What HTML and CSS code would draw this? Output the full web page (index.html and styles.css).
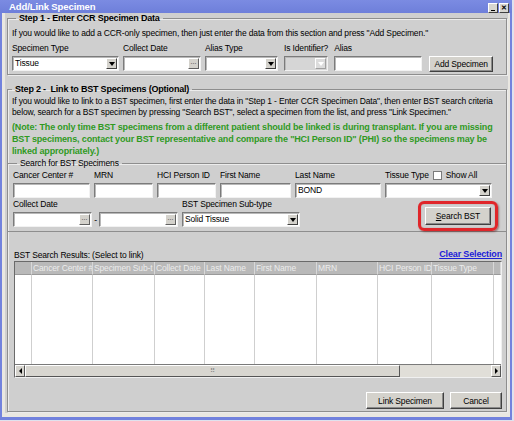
FILE: index.html
```html
<!DOCTYPE html>
<html>
<head>
<meta charset="utf-8">
<link rel="stylesheet" href="styles.css">
</head>
<body>
<div class="window">
  <div class="titlebar">
    <span class="title">Add/Link Specimen</span>
    <div class="tb-btns">
      <span class="tb-btn"><span class="tb-min"></span></span>
      <span class="tb-btn tb-x">&#x2715;</span>
    </div>
  </div>
  <div class="frame">
    <div class="panel">
      <fieldset class="group step1">
        <legend class="legend">Step 1 - Enter CCR Specimen Data</legend>
        <p class="intro">If you would like to add a CCR-only specimen, then just enter the data from this section and press "Add Specimen."</p>
        <div class="row">
          <div class="field">
            <label class="lbl">Specimen Type</label>
            <div class="select w-spec"><span class="sel-text">Tissue</span><span class="dd"><span class="tri"></span></span></div>
          </div>
          <div class="field">
            <label class="lbl">Collect Date</label>
            <div class="input w-cdate"><span class="ell">...</span></div>
          </div>
          <div class="field">
            <label class="lbl">Alias Type</label>
            <div class="select w-atype"><span class="sel-text"></span><span class="dd"><span class="tri"></span></span></div>
          </div>
          <div class="field f-ident">
            <label class="lbl">Is Identifier?</label>
            <div class="select disabled w-ident"><span class="sel-text"></span><span class="dd"><span class="tri"></span></span></div>
          </div>
          <div class="field f-alias">
            <label class="lbl">Alias</label>
            <div class="input w-alias"></div>
          </div>
          <button class="btn btn-add">Add Specimen</button>
        </div>
      </fieldset>

      <fieldset class="group step2">
        <legend class="legend">Step 2 - &nbsp;Link to BST Specimens (Optional)</legend>
        <p class="intro2">If you would like to link to a BST specimen, first enter the data in "Step 1 - Enter CCR Specimen Data", then enter BST search criteria below, search for a BST specimen by pressing "Search BST", select a specimen from the list, and press "Link Specimen."</p>
        <p class="note">(Note: The only time BST specimens from a different patient should be linked is during transplant. If you are missing BST specimens, contact your BST representative and compare the "HCI Person ID" (PHI) so the specimens may be linked appropriately.)</p>

        <fieldset class="group search">
          <legend class="legend-plain">Search for BST Specimens</legend>
          <div class="row r1">
            <div class="field"><label class="lbl">Cancer Center #</label><div class="input w-cc"></div></div>
            <div class="field"><label class="lbl">MRN</label><div class="input w-mrn"></div></div>
            <div class="field"><label class="lbl">HCI Person ID</label><div class="input w-hci"></div></div>
            <div class="field"><label class="lbl">First Name</label><div class="input w-fn"></div></div>
            <div class="field"><label class="lbl">Last Name</label><div class="input w-ln"><span class="val">BOND</span></div></div>
            <div class="field">
              <div class="lbl lbl-tt">Tissue Type <span class="chk"></span> Show All</div>
              <div class="select w-tt"><span class="sel-text"></span><span class="dd"><span class="tri"></span></span></div>
            </div>
          </div>
          <div class="row r2">
            <div class="field">
              <label class="lbl">Collect Date</label>
              <div class="daterange">
                <div class="input w-date"><span class="ell">...</span></div>
                <span class="dash">-</span>
                <div class="input w-date"><span class="ell">...</span></div>
              </div>
            </div>
            <div class="field">
              <label class="lbl">BST Specimen Sub-type</label>
              <div class="select w-sub"><span class="sel-text">Solid Tissue</span><span class="dd"><span class="tri"></span></span></div>
            </div>
            <div class="highlight"><button class="btn btn-search"><u>S</u>earch BST</button></div>
          </div>
        </fieldset>

        <div class="results-head">
          <span class="lbl">BST Search Results: (Select to link)</span>
          <a class="clear">Clear Selection</a>
        </div>
        <div class="table">
          <div class="thead">
            <span class="th"></span>
            <span class="th">Cancer Center #</span>
            <span class="th">Specimen Sub-t</span>
            <span class="th">Collect Date</span>
            <span class="th">Last Name</span>
            <span class="th">First Name</span>
            <span class="th">MRN</span>
            <span class="th">HCI Person ID</span>
            <span class="th">Tissue Type</span>
            <span class="th"></span>
          </div>
          <div class="tbody">
            <span class="td"></span><span class="td"></span><span class="td"></span><span class="td"></span><span class="td"></span><span class="td"></span><span class="td"></span><span class="td"></span><span class="td"></span><span class="td last"></span>
          </div>
          <div class="hscroll">
            <span class="sb-btn"><span class="tri-l"></span></span>
            <span class="thumb"><span class="grip">⠿</span></span>
            <span class="track"></span>
            <span class="sb-btn"><span class="tri-r"></span></span>
          </div>
        </div>
        <div class="footer">
          <button class="btn btn-link">Link Specimen</button>
          <button class="btn btn-cancel">Cancel</button>
        </div>
      </fieldset>
    </div>
  </div>
</div>
</body>
</html>
```

FILE: styles.css
```css
html, body {
  margin: 0;
  padding: 0;
  background: #dfe2ee;
}
body {
  font-family: "Liberation Sans", Arial, sans-serif;
  font-size: 8.5px;
  letter-spacing: -0.15px;
  color: #000;
}
.window {
  width: 512px;
  height: 420px;
  display: flex;
  flex-direction: column;
  background: #7282dd;
}
.titlebar {
  height: 13px;
  display: flex;
  align-items: center;
  justify-content: space-between;
  background: linear-gradient(#7b8be2, #6e7fda);
  padding: 0 3px 0 9px;
}
.title {
  color: #fff;
  font-weight: bold;
  font-size: 9.5px;
  letter-spacing: -0.1px;
}
.tb-btns {
  display: flex;
  gap: 1px;
  margin-top: 2px;
}
.tb-btn {
  width: 8px;
  height: 8px;
  background: #d8d6d0;
  border: 1px solid;
  border-color: #fff #404040 #404040 #fff;
  position: relative;
  font-size: 7px;
  line-height: 8px;
  text-align: center;
  color: #000;
  font-weight: bold;
  letter-spacing: 0;
}
.tb-min {
  position: absolute;
  left: 2px;
  bottom: 1px;
  width: 4px;
  height: 1px;
  background: #000;
}
.frame {
  flex: 1;
  margin: 0 2px 3px 2px;
  background: #e9e7e1;
  padding: 0 2px 4px 3px;
  display: flex;
}
.panel {
  flex: 1;
  background: #cfcfcf;
  padding: 0 1px 0 2px;
  display: flex;
  flex-direction: column;
}
.group {
  margin: 0;
  border: 1px solid #8e8e8e;
  box-shadow: inset 1px 1px 0 #ececec, 1px 1px 0 #ececec;
  min-width: 0;
}
.legend {
  font-weight: bold;
  font-size: 9px;
  letter-spacing: -0.2px;
  padding: 0 3px;
  margin-left: 4px;
}
.legend-plain {
  padding: 0 3px;
  margin-left: 4px;
}
.step1 {
  padding: 2px 9px 5px 4px;
  height: 62px;
  box-sizing: border-box;
  margin-top: 0;
}
.intro {
  margin: 3px 0 6px 0;
  white-space: nowrap;
}
.row {
  display: flex;
  align-items: flex-end;
  gap: 4px;
}
.field {
  display: flex;
  flex-direction: column;
}
.f-ident {
  margin-left: 2px;
}
.f-alias {
  margin-left: 2px;
}
.lbl {
  display: block;
  height: 9px;
  line-height: 9px;
  margin-bottom: 3px;
  white-space: nowrap;
}
.input, .select {
  height: 15px;
  box-sizing: border-box;
  background: #fff;
  border: 1px solid;
  border-color: #7b7b7b #f2f2f2 #f2f2f2 #7b7b7b;
  box-shadow: inset 1px 1px 0 #b8b8b8;
  display: flex;
  align-items: center;
  position: relative;
}
.select {
  justify-content: space-between;
}
.sel-text, .val {
  padding-left: 2px;
  line-height: 13px;
}
.dd {
  width: 11px;
  height: 11px;
  margin-right: 1px;
  background: #d4d2cc;
  border: 1px solid;
  border-color: #fff #404040 #404040 #fff;
  box-sizing: border-box;
  display: flex;
  align-items: center;
  justify-content: center;
}
.tri {
  width: 0;
  height: 0;
  border-left: 3.5px solid transparent;
  border-right: 3.5px solid transparent;
  border-top: 4px solid #000;
}
.disabled {
  background: #d6d6d6;
}
.disabled .dd {
  background: #dcdcdc;
  border-color: #fff #a0a0a0 #a0a0a0 #fff;
}
.disabled .tri {
  border-top-color: #fff;
}
.ell {
  position: absolute;
  right: 1px;
  top: 1px;
  width: 11px;
  height: 11px;
  box-sizing: border-box;
  background: #d4d2cc;
  border: 1px solid;
  border-color: #fff #606060 #606060 #fff;
  font-size: 7px;
  line-height: 6px;
  text-align: center;
  color: #333;
  letter-spacing: 0;
}
.w-spec { width: 107px; }
.w-cdate { width: 78px; }
.w-atype { width: 73px; }
.w-ident { width: 44px; }
.w-alias { width: 88px; }
.btn {
  font-family: "Liberation Sans", Arial, sans-serif;
  font-size: 8.5px;
  letter-spacing: -0.15px;
  background: #d4d2cc;
  border: 1px solid;
  border-color: #fff #404040 #404040 #fff;
  box-shadow: inset -1px -1px 0 #8a8a8a;
  padding: 0;
  height: 16px;
  color: #000;
}
.btn-add {
  width: 64px;
  margin-left: 3px;
  margin-bottom: -1px;
}
.step2 {
  flex: 1;
  margin-top: 9px;
  padding: 0 0 2px 0;
  display: flex;
  flex-direction: column;
  margin-bottom: 1px;
}
.intro2 {
  margin: 2px 4px 0 4px;
  line-height: 11px;
}
.note {
  margin: 3px 4px 0 4px;
  color: #2f9a1f;
  font-weight: bold;
  font-size: 9px;
  letter-spacing: -0.15px;
  line-height: 12px;
}
.search {
  margin: 1px 0 0 0;
  padding: 1px 10px 4px 5px;
  box-shadow: inset 1px 1px 0 #ececec;
  border-left: none;
  border-right: none;
}
.r1 {
  gap: 4px;
  margin-top: 2px;
}
.w-cc { width: 77px; }
.w-mrn { width: 59px; }
.w-hci { width: 59px; }
.w-fn { width: 71px; }
.w-ln { width: 86px; }
.w-tt { width: 107px; }
.lbl-tt {
  display: flex;
  align-items: center;
  gap: 4px;
}
.chk {
  width: 9px;
  height: 9px;
  box-sizing: border-box;
  background: #fff;
  border: 1px solid #7b7b7b;
  display: inline-block;
}
.r2 {
  margin-top: 2px;
  gap: 4px;
  align-items: flex-end;
}
.daterange {
  display: flex;
  align-items: center;
  gap: 2px;
}
.w-date { width: 79px; }
.dash {
  width: 3px;
  text-align: center;
}
.w-sub { width: 118px; }
.highlight {
  margin-left: auto;
  margin-right: -2px;
  margin-bottom: -4px;
  border: 3px solid #e0262a;
  border-radius: 6px;
  padding: 3px 4px;
  box-shadow: 1px 1px 2px rgba(80, 0, 0, 0.45), inset 0 0 1px rgba(120, 0, 0, 0.5);
  display: flex;
}
.btn-search {
  width: 66px;
  height: 18px;
}
.results-head {
  display: flex;
  justify-content: space-between;
  align-items: flex-end;
  margin: 16px 4px 0 6px;
  height: 13px;
}
.results-head .lbl {
  margin-bottom: 1px;
}
.clear {
  color: #1c20d8;
  font-weight: bold;
  text-decoration: underline;
  font-size: 9px;
  margin-bottom: 2px;
}
.table {
  margin: 0 4px 0 6px;
  border: 1px solid;
  border-color: #6a6a6a #f0f0f0 #f0f0f0 #6a6a6a;
  background: #fff;
  display: flex;
  flex-direction: column;
  height: 117px;
  box-sizing: border-box;
}
.thead, .tbody {
  display: grid;
  grid-template-columns: 17px 61px 62px 50px 50px 62px 61px 54px 62px 1fr;
}
.thead {
  height: 13px;
  background: #b9b9b9;
}
.th {
  color: #ececec;
  border-right: 1px solid #d8d8d8;
  border-bottom: 1px solid #9a9a9a;
  padding-left: 1px;
  line-height: 12px;
  white-space: nowrap;
  overflow: hidden;
  text-overflow: clip;
}
.tbody {
  flex: 1;
}
.td {
  border-right: 1px solid #cfcfcf;
}
.td.last {
  border-right: none;
  border-left: 1px solid #cfcfcf;
  margin-left: -1px;
}
.hscroll {
  height: 12px;
  display: flex;
  background: #d6d4ce;
  border-top: 1px solid #7a7a7a;
}
.sb-btn {
  width: 10px;
  background: #d6d4ce;
  border: 1px solid;
  border-color: #fff #555 #555 #fff;
  box-sizing: border-box;
  display: flex;
  align-items: center;
  justify-content: center;
}
.tri-l {
  border-top: 3px solid transparent;
  border-bottom: 3px solid transparent;
  border-right: 3px solid #000;
}
.tri-r {
  border-top: 3px solid transparent;
  border-bottom: 3px solid transparent;
  border-left: 3px solid #000;
}
.thumb {
  width: 375px;
  background: #d8d6d0;
  border: 1px solid;
  border-color: #fff #555 #555 #fff;
  box-sizing: border-box;
  display: flex;
  align-items: center;
  justify-content: center;
}
.grip {
  font-size: 7px;
  color: #888;
  letter-spacing: 0;
}
.track {
  flex: 1;
  background: #e0ded8;
}
.footer {
  display: flex;
  justify-content: flex-end;
  gap: 6px;
  margin: 14px 4px 0 0;
}
.btn-link {
  width: 78px;
  height: 17px;
}
.btn-cancel {
  width: 52px;
  height: 17px;
}
```
